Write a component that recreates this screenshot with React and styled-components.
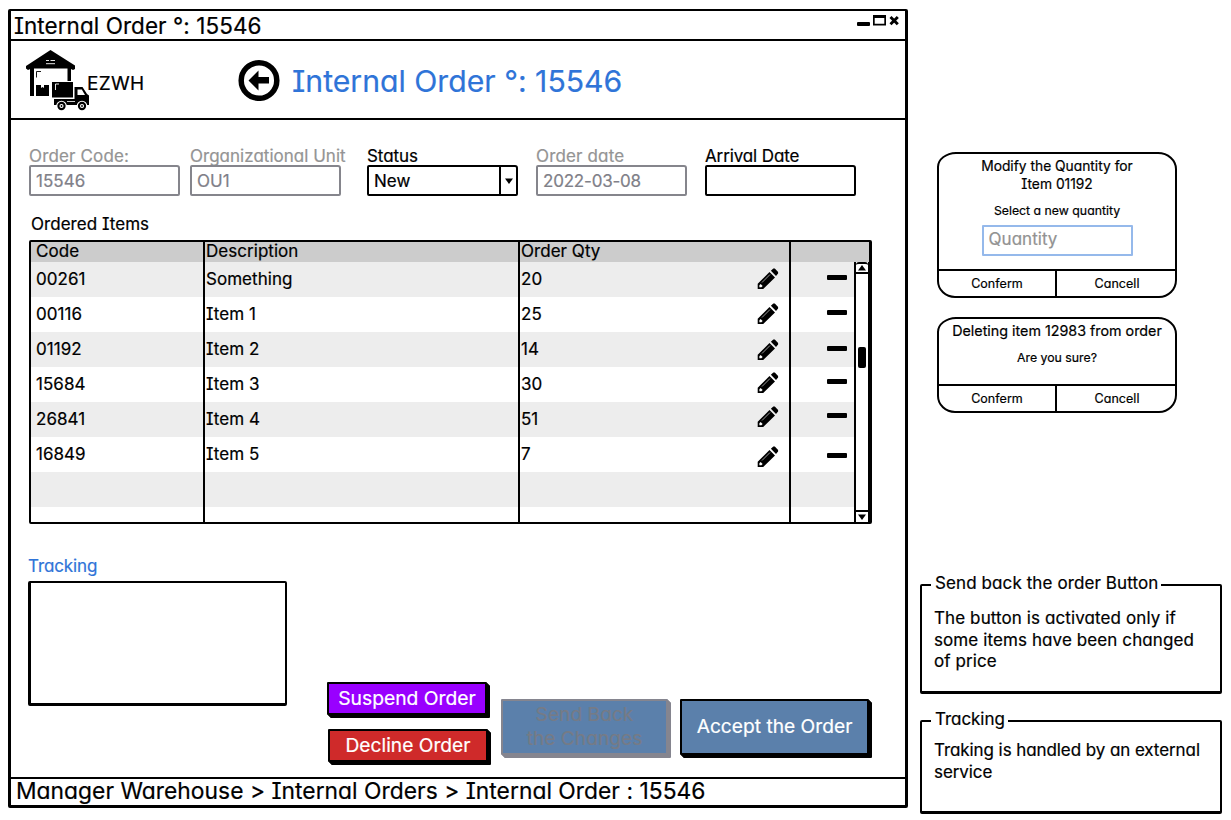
import React from "react";
import styled, { createGlobalStyle, css } from "styled-components";

const Global = createGlobalStyle`
  * { box-sizing: border-box; }
  body {
    margin: 0;
    background: #fff;
    color: #000;
    font: 17px/20px Inter, "Liberation Sans", sans-serif;
    font-feature-settings: "cv08", "cv11", "calt" 0;
    letter-spacing: 0.04px;
    -webkit-text-stroke: 0.2px currentColor;
  }
`;

const Page = styled.div`
  display: flex;
  width: 1231px;
  height: 820px;
  padding: 9px 0 0 8px;
  overflow: hidden;
`;

const Window = styled.main`
  display: flex;
  flex-direction: column;
  width: 900px;
  height: 799px;
  border: solid #000;
  border-width: 2px 3px 3px;
  border-radius: 2px;
`;

const TitleBar = styled.div`
  display: flex;
  justify-content: space-between;
  height: 30px;
  padding: 2px 6px 0 3px;
  border-bottom: 2px solid #000;
  font-size: 22.5px;
  line-height: 26px;
  letter-spacing: 0.06px;
  white-space: pre;
  svg { margin-top: 1px; }
`;

const Header = styled.header`
  display: flex;
  align-items: center;
  height: 79px;
  padding-left: 15px;
  border-bottom: 2px solid #000;
`;

const Brand = styled.div`
  display: flex;
  align-items: center;
  width: 212px;
  font-size: 19px;
  letter-spacing: 0.3px;
  svg { flex: none; margin-top: 2px; }
  span { margin: 9px 0 0 -3px; }
`;

const Heading = styled.h1`
  margin: 3px 0 0 12px;
  color: #2f74d8;
  font-size: 30.2px;
  line-height: 36px;
  font-weight: 400;
  letter-spacing: 0;
`;

const Body = styled.div`
  flex: 1;
  padding: 27px 0 0 18px;
`;

const Fields = styled.div`
  display: flex;
  height: 49px;
`;

const Field = styled.label`
  display: flex;
  flex-direction: column;
  width: 151px;
  margin-right: ${(p) => p.$gap || 0}px;
  color: ${(p) => (p.$disabled ? "#949494" : "#000")};
  line-height: 18px;
  white-space: nowrap;
  letter-spacing: ${(p) => p.$track || 0.02}px;
`;

const Control = styled.div`
  display: flex;
  align-items: center;
  justify-content: space-between;
  height: 31px;
  padding: 0 0 0 5px;
  border: 2px solid ${(p) => (p.$disabled ? "#85858c" : "#000")};
  border-radius: 2px 3px 2px 2px;
  color: ${(p) => (p.$disabled ? "#808088" : "#000")};
  letter-spacing: ${(p) => p.$track || 0.05}px;
`;

const Caret = styled.div`
  display: flex;
  align-items: center;
  justify-content: center;
  width: 17px;
  height: 27px;
  border-left: 2px solid #000;
`;

const SectionLabel = styled.div`
  color: ${(p) => (p.$blue ? "#2f74d8" : "#000")};
  letter-spacing: ${(p) => (p.$blue ? -0.1 : 0.04)}px;
  padding: ${(p) => (p.$blue ? 0 : "18px 0 0 2px")};
`;

const Table = styled.div`
  display: flex;
  width: 843px;
  height: 284px;
  margin-top: 6px;
  border: solid #000;
  border-width: 2px 3px 2px 2px;
  border-radius: 2px;
`;

const Column = styled.div`
  width: ${(p) => p.$w}px;
  border-left: ${(p) => (p.$first ? 0 : 2)}px solid #000;
  margin: -1px 0;
  padding: 1px 0;
`;

const HeadCell = styled.div`
  height: 20px;
  padding-left: ${(p) => p.$pad || 1}px;
  background: #ccc;
  line-height: 19px;
`;

const Cell = styled.div`
  display: flex;
  align-items: center;
  justify-content: space-between;
  height: 35px;
  padding: 0 ${(p) => p.$end || 0}px 2px ${(p) => p.$pad || 1}px;
  background: ${(p) => (p.$shade ? "#ededed" : "#fff")};
`;

const Nudge = styled.span`
  display: flex;
  transform: translateY(${(p) => p.$y}px);
`;

const MinusMark = styled.i`
  width: 20px;
  height: 5px;
  border-radius: 1px;
  background: #000;
`;

const ScrollColumn = styled.div`
  display: flex;
  flex-direction: column;
  width: 15px;
  &::before { content: ""; height: 20px; background: #ccc; }
`;

const ScrollBar = styled.div`
  display: flex;
  flex: 1;
  flex-direction: column;
  align-items: center;
  justify-content: space-between;
  border: solid #000;
  border-width: 0 1px 0 2px;
`;

const ScrollButton = styled.div`
  display: flex;
  align-items: center;
  justify-content: center;
  width: 100%;
  height: 12px;
  border: solid #000;
  border-width: ${(p) => (p.$down ? "2px 0 0" : "2px 0 2px")};
  border-radius: ${(p) => (p.$down ? "0" : "3px 3px 0 0")};
`;

const Thumb = styled.div`
  width: 8px;
  height: 21px;
  margin-bottom: 70px;
  border-radius: 2px;
  background: #000;
`;

const Lower = styled.div`
  display: flex;
  margin-top: 32px;
`;

const TrackingPane = styled.section`
  width: 299px;
  margin-left: -1px;
`;

const TrackingBox = styled.div`
  width: 259px;
  height: 125px;
  margin-top: 5px;
  border: solid #000;
  border-width: 2px 2px 3px 3px;
  border-radius: 2px;
`;

const Actions = styled.div`
  display: flex;
  align-items: flex-start;
  padding-top: 126px;
`;

const Stack = styled.div`
  display: flex;
  flex-direction: column;
  gap: 14px;
  width: 174px;
`;

const disabledButton = css`
  border-color: #85858f;
  box-shadow: 1px 1px #85858f, 2px 2px #85858f, 3px 3px #85858f;
  color: #767b86;
`;

const Button = styled.button`
  width: ${(p) => p.$w}px;
  height: ${(p) => p.$h}px;
  margin: ${(p) => p.$m || 0};
  padding: 0 0 ${(p) => p.$lift || 0}px;
  border: 2px solid #000;
  border-radius: 1px;
  box-shadow: 1px 1px #000, 2px 2px #000, 3px 3px #000;
  background: ${(p) => p.$bg};
  color: #fff;
  font: inherit;
  font-feature-settings: inherit;
  font-size: ${(p) => p.$size}px;
  line-height: 24px;
  letter-spacing: 0;
  white-space: pre-line;
  ${(p) => p.disabled && disabledButton}
`;

const Footer = styled.footer`
  height: 28px;
  padding: 0 0 0 5px;
  border-top: 2px solid #000;
  font-size: 22.8px;
  line-height: 24px;
  letter-spacing: 0.03px;
  white-space: nowrap;
`;

const Aside = styled.aside`
  display: flex;
  flex-direction: column;
  width: 302px;
  margin-left: 12px;
  padding-top: 143px;
`;

const Dialog = styled.section`
  display: flex;
  flex-direction: column;
  align-items: center;
  width: 240px;
  height: ${(p) => p.$h}px;
  margin: 0 0 ${(p) => p.$gap}px 17px;
  border: 2px solid #000;
  border-radius: 19px 19px 18px 18px / 15px 17px 18px 17px;
`;

const DialogTitle = styled.h2`
  margin: ${(p) => p.$top}px 0 0;
  font-size: ${(p) => p.$size}px;
  line-height: 18px;
  font-weight: 400;
  letter-spacing: 0;
  text-align: center;
  white-space: pre-line;
`;

const DialogText = styled.p`
  margin: ${(p) => p.$top}px 0 0;
  font-size: 12.3px;
  line-height: 16px;
  letter-spacing: 0;
`;

const QuantityInput = styled.div`
  width: 151px;
  height: 31px;
  margin-top: 6px;
  padding: 2px 5px;
  border: 2px solid #95b9eb;
  border-radius: 1px;
  color: #929292;
`;

const DialogActions = styled.div`
  display: flex;
  align-self: stretch;
  height: 27px;
  margin-top: auto;
  border-top: 2px solid #000;
  font-size: 12.5px;
  line-height: 26px;
  text-align: center;
  span { flex: 1; }
  span + span { border-left: 2px solid #000; padding-left: 2px; }
`;

const Note = styled.fieldset`
  width: 302px;
  height: ${(p) => p.$h}px;
  margin: 0 0 ${(p) => p.$gap || 0}px;
  padding: ${(p) => p.$top}px 8px 0 12px;
  border: solid #000;
  border-width: 2px 2px 3px 2px;
  border-radius: 2px;
  line-height: 21.6px;
  white-space: pre-line;
  letter-spacing: ${(p) => p.$track || 0}px;
`;

const Legend = styled.legend`
  margin-left: -3px;
  padding: 0 3px 4px 4px;
  line-height: 20px;
  letter-spacing: ${(p) => p.$track || 0}px;
`;

const WarehouseIcon = () => (
  <svg width="64" height="62" viewBox="26 50 64 62">
    <path d="M50.5 50 75 65.5V69l-2 1-3-1.500H31.500L28 70l-2-1.500V66z" />
    <path d="M30 67h4v29h-4zM67.500 67H71v14h-3.500z" />
    <path d="M46 60.500h3M50.500 60.500h4.500M46 63.700h9" stroke="#fff" strokeWidth="0.9" />
    <path d="M36.500 77.500V71.500H41M36.500 73.500v1" stroke="#000" strokeWidth="0.9" fill="none" />
    <path d="M36 85h5v3l1.500-1 1.500 1v-3h5v11H36z" />
    <path d="M52 82h21v15.500H52z" />
    <path d="M55.500 90v-6H59" stroke="#fff" strokeWidth="0.9" fill="none" />
    <path d="M74.500 87h8l4.500 7 2 1.500V105H54v-6h20.500z" />
    <path d="M77.500 89.500h4.300l3.200 5.500h-7.500z" fill="#fff" />
    <path d="M67 101.500h8" stroke="#fff" strokeWidth="0.8" />
    {[61.5, 82].map((x) => (
      <g key={x}>
        <circle cx={x} cy="106" r="5.300" fill="#fff" />
        <circle cx={x} cy="106" r="3.100" fill="#fff" stroke="#000" strokeWidth="2.100" />
        <circle cx={x} cy="106" r="0.900" />
      </g>
    ))}
  </svg>
);

const BackIcon = () => (
  <svg width="42" height="42" viewBox="0 0 42 42">
    <circle cx="21" cy="21.5" r="17.800" fill="none" stroke="#000" strokeWidth="5.500" />
    <path d="M10.500 21.500 20.500 11.500v6.500H31v6.500H20.500V31.500z" />
  </svg>
);

const WindowControls = () => (
  <svg width="42" height="13" viewBox="0 0 42 13">
    <rect x="0" y="8" width="13" height="4" rx="1" />
    <path d="M16 1h13v10.500H16zM17.700 4v5.800h9.600V4z" fillRule="evenodd" />
    <path d="m33.500 3 7.300 7.300M40.800 3l-7.300 7.300" stroke="#000" strokeWidth="2.900" />
  </svg>
);

const PencilIcon = () => (
  <svg width="22" height="22" viewBox="0 0 22 22">
    <path d="M.7 21v-5.300L12.500 3.900 18 9.400 6.200 21zM13.900 2.700 16.300.500h1.500l3.300 3.400v1.500l-2.100 2.600z" />
    <path d="M2.400 17.200 3.600 16l2 2-1.200 1.300H2.400z" fill="#fff" />
    <path d="m5 14.500 8-8" stroke="#aaa" strokeWidth="0.9" />
  </svg>
);

const Triangle = ({ down }) => (
  <svg width="8" height="6" viewBox="0 0 8 6">
    <path d={down ? "M0 .5h8L4 6z" : "M0 5.500h8L4 0z"} />
  </svg>
);

const items = [
  { code: "00261", name: "Something", qty: "20", pencil: 0, minus: -1 },
  { code: "00116", name: "Item 1", qty: "25", pencil: 0, minus: -1 },
  { code: "01192", name: "Item 2", qty: "14", pencil: 1, minus: 0 },
  { code: "15684", name: "Item 3", qty: "30", pencil: -1, minus: -2 },
  { code: "26841", name: "Item 4", qty: "51", pencil: -2, minus: -3 },
  { code: "16849", name: "Item 5", qty: "7", pencil: 3, minus: 2 },
];

export default function App() {
  return (
    <Page>
      <Global />
      <Window>
        <TitleBar>
          <span>Internal Order °: 15546</span>
          <WindowControls />
        </TitleBar>
        <Header>
          <Brand>
            <WarehouseIcon />
            <span>EZWH</span>
          </Brand>
          <BackIcon />
          <Heading>Internal Order °: 15546</Heading>
        </Header>
        <Body>
          <Fields>
            <Field $disabled $gap={10} $track={0.15}>
              Order Code:
              <Control $disabled>15546</Control>
            </Field>
            <Field $disabled $gap={26}>
              Organizational Unit
              <Control $disabled>OU1</Control>
            </Field>
            <Field $gap={18} $track={-0.05}>
              Status
              <Control>
                New
                <Caret>
                  <Triangle down />
                </Caret>
              </Control>
            </Field>
            <Field $disabled $gap={18} $track={0.15}>
              Order date
              <Control $disabled $track={-0.2}>2022-03-08</Control>
            </Field>
            <Field $track={-0.12}>
              Arrival Date
              <Control />
            </Field>
          </Fields>
          <SectionLabel>Ordered Items</SectionLabel>
          <Table>
            <Column $first $w={172}>
              <HeadCell $pad={5}>Code</HeadCell>
              {items.map((it, i) => (
                <Cell key={it.code} $pad={5} $shade={i % 2 === 0}>{it.code}</Cell>
              ))}
              <Cell $shade />
            </Column>
            <Column $w={315}>
              <HeadCell>Description</HeadCell>
              {items.map((it, i) => (
                <Cell key={it.code} $shade={i % 2 === 0}>{it.name}</Cell>
              ))}
              <Cell $shade />
            </Column>
            <Column $w={271}>
              <HeadCell>Order Qty</HeadCell>
              {items.map((it, i) => (
                <Cell key={it.code} $end={10} $shade={i % 2 === 0}>
                  {it.qty}
                  <Nudge $y={it.pencil}><PencilIcon /></Nudge>
                </Cell>
              ))}
              <Cell $shade />
            </Column>
            <Column $w={65}>
              <HeadCell />
              {items.map((it, i) => (
                <Cell key={it.code} $pad={36} $shade={i % 2 === 0}>
                  <Nudge $y={it.minus}><MinusMark /></Nudge>
                </Cell>
              ))}
              <Cell $shade />
            </Column>
            <ScrollColumn>
              <ScrollBar>
                <ScrollButton><Triangle /></ScrollButton>
                <Thumb />
                <ScrollButton $down><Triangle down /></ScrollButton>
              </ScrollBar>
            </ScrollColumn>
          </Table>
          <Lower>
            <TrackingPane>
              <SectionLabel $blue>Tracking</SectionLabel>
              <TrackingBox />
            </TrackingPane>
            <Actions>
              <Stack>
                <Button $w={160} $h={33} $lift={2} $bg="#9900ff" $size={19.3}>Suspend Order</Button>
                <Button $w={160} $h={33} $m="0 0 0 1px" $lift={2} $bg="#cf2a2a" $size={19.2}>Decline Order</Button>
              </Stack>
              <Button disabled $w={167} $h={56} $m="17px 12px 0 0" $lift={2} $bg="#5b80ab" $size={19.2}>
                {"Send Back\nthe Changes"}
              </Button>
              <Button $w={189} $h={56} $m="17px 0 0" $lift={2} $bg="#5b80ab" $size={19.2}>
                Accept the Order
              </Button>
            </Actions>
          </Lower>
        </Body>
        <Footer>Manager Warehouse &gt; Internal Orders &gt; Internal Order : 15546</Footer>
      </Window>
      <Aside>
        <Dialog $h={146} $gap={19}>
          <DialogTitle $top={3} $size={13.8}>{"Modify the Quantity for\nItem 01192"}</DialogTitle>
          <DialogText $top={10}>Select a new quantity</DialogText>
          <QuantityInput>Quantity</QuantityInput>
          <DialogActions>
            <span>Conferm</span>
            <span>Cancell</span>
          </DialogActions>
        </Dialog>
        <Dialog $h={96} $gap={160}>
          <DialogTitle $top={3} $size={14.3}>Deleting item 12983 from order</DialogTitle>
          <DialogText $top={10}>Are you sure?</DialogText>
          <DialogActions>
            <span>Conferm</span>
            <span>Cancell</span>
          </DialogActions>
        </Dialog>
        <Note $h={121} $gap={15} $top={11} $track={0.1}>
          <Legend $track={0.1}>Send back the order Button</Legend>
          {"The button is activated only if\nsome items have been changed\nof price"}
        </Note>
        <Note $h={105} $top={7} $track={-0.08}>
          <Legend $track={-0.05}>Tracking</Legend>
          {"Traking is handled by an external\nservice"}
        </Note>
      </Aside>
    </Page>
  );
}
